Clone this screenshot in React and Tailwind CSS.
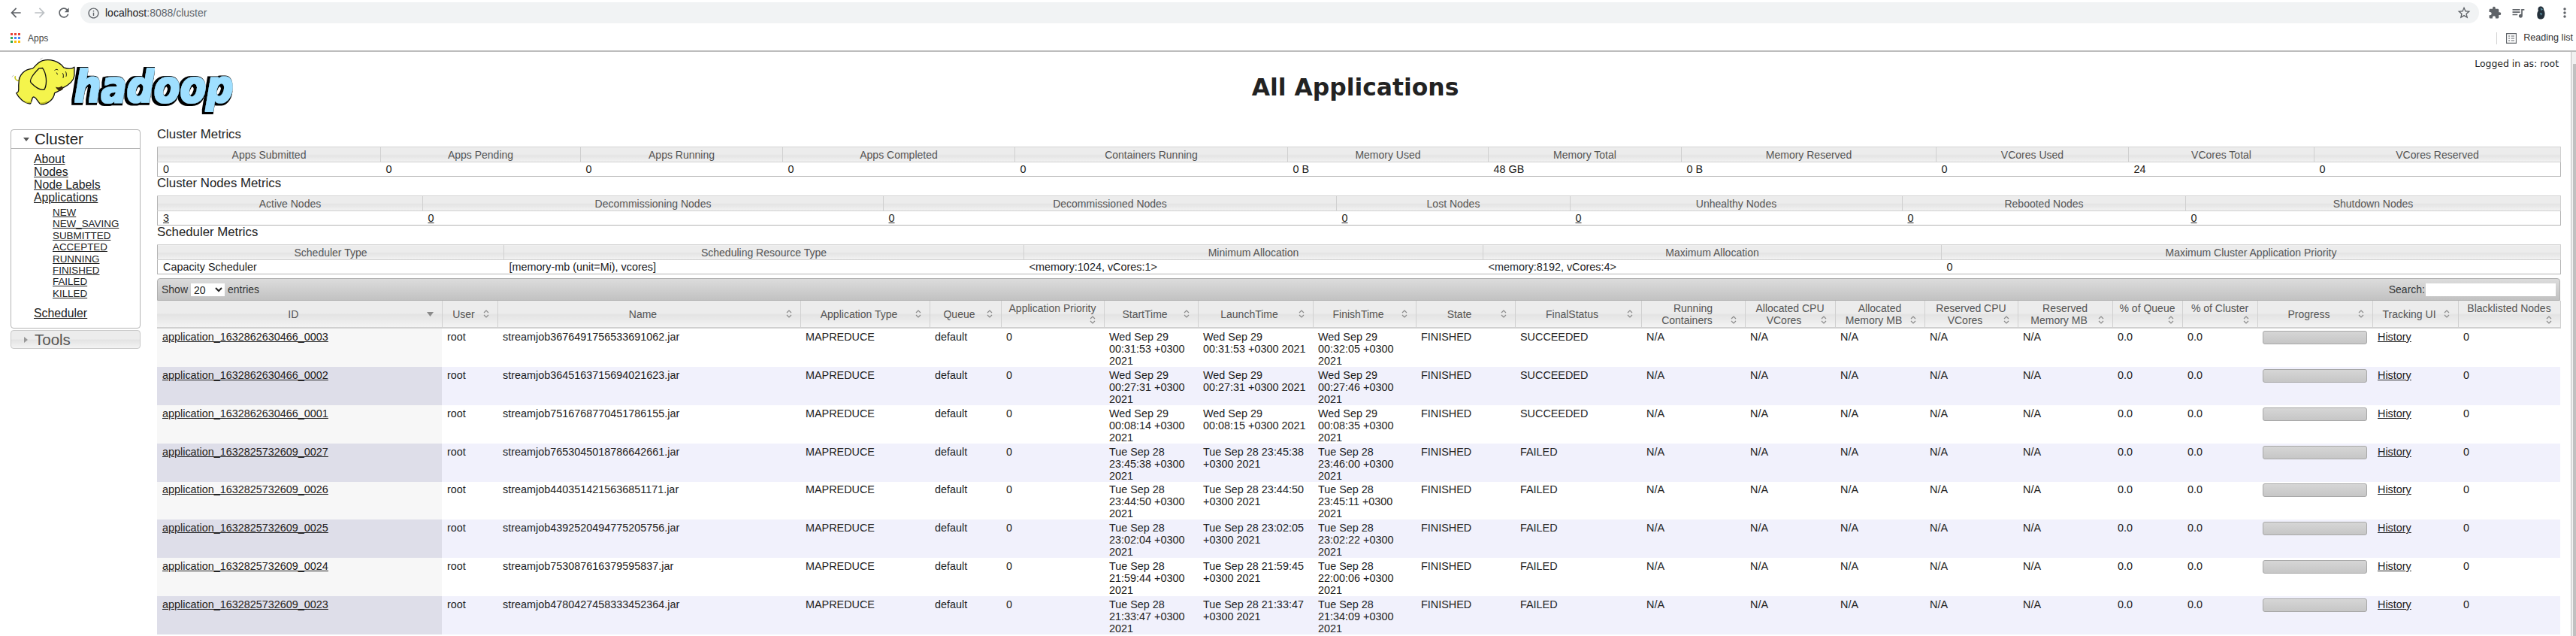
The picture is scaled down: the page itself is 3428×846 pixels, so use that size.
import React from 'react';
import {
  MdArrowBack,
  MdArrowForward,
  MdRefresh,
  MdInfoOutline,
  MdStarBorder,
  MdExtension,
  MdQueueMusic,
  MdMoreVert,
} from 'react-icons/md';

const headerBg = 'bg-[linear-gradient(180deg,#ececec_0%,#ececec_48%,#e3e3e3_52%,#f3f3f3_100%)]';

const clusterMetrics = [
  ['Apps Submitted', '0', 'w-[297px]'],
  ['Apps Pending', '0', 'w-[266px]'],
  ['Apps Running', '0', 'w-[269px]'],
  ['Apps Completed', '0', 'w-[309px]'],
  ['Containers Running', '0', 'w-[363px]'],
  ['Memory Used', '0 B', 'w-[267px]'],
  ['Memory Total', '48 GB', 'w-[257px]'],
  ['Memory Reserved', '0 B', 'w-[339px]'],
  ['VCores Used', '0', 'w-[256px]'],
  ['VCores Total', '24', 'w-[247px]'],
  ['VCores Reserved', '0', 'w-[328px]'],
];

const nodeMetrics = [
  ['Active Nodes', '3', 'w-[353px]'],
  ['Decommissioning Nodes', '0', 'w-[613px]'],
  ['Decommissioned Nodes', '0', 'w-[603px]'],
  ['Lost Nodes', '0', 'w-[311px]'],
  ['Unhealthy Nodes', '0', 'w-[442px]'],
  ['Rebooted Nodes', '0', 'w-[377px]'],
  ['Shutdown Nodes', '0', 'w-[499px]'],
];

const schedulerMetrics = [
  ['Scheduler Type', 'Capacity Scheduler', 'w-[461px]'],
  ['Scheduling Resource Type', '[memory-mb (unit=Mi), vcores]', 'w-[692px]'],
  ['Minimum Allocation', '<memory:1024, vCores:1>', 'w-[611px]'],
  ['Maximum Allocation', '<memory:8192, vCores:4>', 'w-[610px]'],
  ['Maximum Cluster Application Priority', '0', 'w-[824px]'],
];

// \n in a title is where the real page wraps it
const columns = [
  ['ID', 'w-[379px]'],
  ['User', 'w-[74px]'],
  ['Name', 'w-[403px]'],
  ['Application Type', 'w-[172px]'],
  ['Queue', 'w-[95px]'],
  ['Application Priority', 'w-[137px]'],
  ['StartTime', 'w-[125px]'],
  ['LaunchTime', 'w-[153px]'],
  ['FinishTime', 'w-[137px]'],
  ['State', 'w-[132px]'],
  ['FinalStatus', 'w-[168px]'],
  ['Running\nContainers', 'w-[138px]'],
  ['Allocated CPU\nVCores', 'w-[120px]'],
  ['Allocated\nMemory MB', 'w-[119px]'],
  ['Reserved CPU\nVCores', 'w-[124px]'],
  ['Reserved\nMemory MB', 'w-[126px]'],
  ['% of Queue', 'w-[93px]'],
  ['% of Cluster', 'w-[100px]'],
  ['Progress', 'w-[153px]'],
  ['Tracking UI', 'w-[114px]'],
  ['Blacklisted Nodes', 'w-[136px]'],
];

const apps = [
  ['application_1632862630466_0003', 'streamjob3676491756533691062.jar', 'Wed Sep 29 00:31:53 +0300 2021', 'Wed Sep 29\n00:31:53 +0300 2021', 'Wed Sep 29 00:32:05 +0300 2021', 'SUCCEEDED'],
  ['application_1632862630466_0002', 'streamjob3645163715694021623.jar', 'Wed Sep 29 00:27:31 +0300 2021', 'Wed Sep 29\n00:27:31 +0300 2021', 'Wed Sep 29 00:27:46 +0300 2021', 'SUCCEEDED'],
  ['application_1632862630466_0001', 'streamjob7516768770451786155.jar', 'Wed Sep 29 00:08:14 +0300 2021', 'Wed Sep 29\n00:08:15 +0300 2021', 'Wed Sep 29 00:08:35 +0300 2021', 'SUCCEEDED'],
  ['application_1632825732609_0027', 'streamjob7653045018786642661.jar', 'Tue Sep 28 23:45:38 +0300 2021', 'Tue Sep 28 23:45:38\n+0300 2021', 'Tue Sep 28 23:46:00 +0300 2021', 'FAILED'],
  ['application_1632825732609_0026', 'streamjob4403514215636851171.jar', 'Tue Sep 28 23:44:50 +0300 2021', 'Tue Sep 28 23:44:50\n+0300 2021', 'Tue Sep 28 23:45:11 +0300 2021', 'FAILED'],
  ['application_1632825732609_0025', 'streamjob4392520494775205756.jar', 'Tue Sep 28 23:02:04 +0300 2021', 'Tue Sep 28 23:02:05\n+0300 2021', 'Tue Sep 28 23:02:22 +0300 2021', 'FAILED'],
  ['application_1632825732609_0024', 'streamjob753087616379595837.jar', 'Tue Sep 28 21:59:44 +0300 2021', 'Tue Sep 28 21:59:45\n+0300 2021', 'Tue Sep 28 22:00:06 +0300 2021', 'FAILED'],
  ['application_1632825732609_0023', 'streamjob4780427458333452364.jar', 'Tue Sep 28 21:33:47 +0300 2021', 'Tue Sep 28 21:33:47\n+0300 2021', 'Tue Sep 28 21:34:09 +0300 2021', 'FAILED'],
];

const HadoopLogo = () => (
  <svg viewBox="45 50 895 215" className="w-[298px] h-[72px] overflow-visible shrink-0">
    <defs>
      {/* fattens the letters and throws the black shadow down-left */}
      <filter id="hadoop-type" x="-10%" y="-20%" width="120%" height="140%">
        <feMorphology in="SourceAlpha" operator="dilate" radius="3" result="fat" />
        <feFlood floodColor="#9fdfff" />
        <feComposite in2="fat" operator="in" result="face" />
        <feMorphology in="SourceAlpha" operator="dilate" radius="8" result="fatter" />
        <feOffset in="fatter" dx="-5" dy="3" result="moved" />
        <feFlood floodColor="#000" />
        <feComposite in2="moved" operator="in" result="shadow" />
        <feMerge>
          <feMergeNode in="shadow" />
          <feMergeNode in="face" />
        </feMerge>
      </filter>
    </defs>
    <text
      x="296"
      y="226"
      textLength="636"
      lengthAdjust="spacingAndGlyphs"
      fontFamily="DejaVu Sans"
      fontWeight="bold"
      fontStyle="italic"
      fontSize="176"
      fill="#9fdfff"
      filter="url(#hadoop-type)"
    >
      hadoop
    </text>
    {/* elephant */}
    <path d="M62 122c-6 8 2 16 8 18 8 2 10-6 6-12" fill="none" stroke="#c8c820" strokeWidth="5" />
    <path
      d="M297 86c-10 8-26 8-42 2-20-26-55-36-85-28-20 6-30 25-40 32-30 3-55 23-55 58-3 20 5 35-10 40 10 20 30 40 55 43 10-8 5-28 15-28 15 5 15 25 30 30 25 0 50-20 53-45 7-5 27-10 32-20 20-10 45-25 47-50z"
      fill="#f4f44c"
      stroke="#111"
      strokeWidth="4"
      strokeLinejoin="round"
    />
    <path d="M155 92c-25 25-40 48-30 58 20 20 40 30 53 25 12-25 7-65-8-85z" fill="#f7f75a" stroke="#111" strokeWidth="4" />
    <path d="M222 165c8 16 20 20 30 8l-4-12c-8 6-18 8-26 4z" fill="#3a2a10" />
    <path d="M218 100c4-6 10-6 14-2M226 108l4 8M250 110c4 6 4 12 2 20M262 104c4 6 4 14 2 20" fill="none" stroke="#111" strokeWidth="3" />
    <path d="M160 56l10-6M54 118l-6 8" fill="none" stroke="#999" strokeWidth="2" />
    <path d="M100 225c10 3 18 4 26 1M160 230c10 2 20 0 28-6" fill="none" stroke="#b8b820" strokeWidth="5" />
  </svg>
);

const SortIcon = ({ sorted }) => (
  <span className="float-right w-4 h-4 flex items-center justify-center text-[#8a8a8a]">
    {sorted ? (
      <svg viewBox="0 0 9 6" className="w-[9px] h-[6px]">
        <path d="M0 0h9L4.5 6z" fill="currentColor" />
      </svg>
    ) : (
      <svg viewBox="0 0 8 13" className="w-2 h-[13px]">
        <path d="M1 5l3-3 3 3M1 8l3 3 3-3" fill="none" stroke="currentColor" strokeWidth="1.2" />
      </svg>
    )}
  </span>
);

const MetricsTable = ({ title, cells, link }) => (
  <div>
    <h3 className="h-[25px] text-[16.8px] leading-[18px] font-normal text-[#222]">{title}</h3>
    <table className="table-fixed border-collapse w-[3198px] border border-[#b4b4b4] border-t-[#d0d0d0]">
      <colgroup>
        {cells.map(c => (
          <col key={c[0]} className={c[2]} />
        ))}
      </colgroup>
      <thead>
        <tr>
          {cells.map(c => (
            <th key={c[0]} className={`h-[20px] p-0 text-center text-[14px] leading-[16px] font-normal text-[#555] border-r border-b border-[#d0d0d0] ${headerBg}`}>
              {c[0]}
            </th>
          ))}
        </tr>
      </thead>
      <tbody>
        <tr>
          {cells.map(c => (
            <td key={c[0]} className="h-[19px] p-0 pl-[7px] text-[14.4px] leading-[16px] text-[#222]">
              {link ? <a className="underline">{c[1]}</a> : c[1]}
            </td>
          ))}
        </tr>
      </tbody>
    </table>
  </div>
);

const Sidebar = () => (
  <aside className="w-[173px] mt-[2px] shrink-0">
    <div className="border border-[#b4b4b4] rounded-[4px] h-[265px]">
      <div className="h-[25px] flex items-center pl-[16px] border-b border-[#b4b4b4]">
        <svg viewBox="0 0 8 5" className="w-2 h-[5px] mr-[7px] text-[#555]"><path d="M0 0h8L4 5z" fill="currentColor" /></svg>
        <span className="text-[20.5px] leading-[24px] text-[#222]">Cluster</span>
      </div>
      <div className="pt-[5px] pl-[30px] text-[15.8px] leading-[17px] text-[#222] underline">
        <a className="block">About</a>
        <a className="block">Nodes</a>
        <a className="block">Node Labels</a>
        <a className="block">Applications</a>
        <div className="mt-[4px] ml-[25px] text-[13.4px] leading-[15.4px]">
          {['NEW', 'NEW_SAVING', 'SUBMITTED', 'ACCEPTED', 'RUNNING', 'FINISHED', 'FAILED', 'KILLED'].map(s => (
            <a key={s} className="block">{s}</a>
          ))}
        </div>
        <a className="block mt-[10px]">Scheduler</a>
      </div>
    </div>
    <div className={`mt-[2px] h-[25px] flex items-center pl-[17px] border border-[#c8c8c8] rounded-[4px] ${headerBg}`}>
      <svg viewBox="0 0 5 8" className="w-[5px] h-2 mr-[9px] text-[#999]"><path d="M0 0l5 4-5 4z" fill="currentColor" /></svg>
      <span className="text-[20.5px] leading-[24px] text-[#555]">Tools</span>
    </div>
  </aside>
);

const AppsTable = () => (
  <table className="table-fixed border-collapse w-[3198px]">
    <colgroup>
      {columns.map(c => (
        <col key={c[0]} className={c[1]} />
      ))}
    </colgroup>
    <thead>
      <tr>
        {columns.map((c, i) => (
          <th key={c[0]} className={`h-[36px] px-[7px] py-0 align-middle text-center whitespace-pre-line text-[14px] leading-[16px] font-normal text-[#555] border-r border-b-2 border-[#d0d0d0] ${headerBg}`}>
            {c[0]}
            <SortIcon sorted={i === 0} />
          </th>
        ))}
      </tr>
    </thead>
    <tbody className="text-[14.4px] leading-[16px] text-[#222]">
      {apps.map((a, r) => {
        const even = r % 2 === 1;
        const bg = even ? 'bg-[#f1f1fc]' : 'bg-white';
        const td = `p-0 pl-[7px] pr-[7px] pt-[2.875px] align-top ${bg}`;
        return (
          <tr key={a[0]} className="h-[50.875px]">
            <td className={`p-0 pl-[7px] pt-[2.875px] align-top ${even ? 'bg-[#dedee9]' : 'bg-[#f7f7f7]'}`}>
              <a className="underline">{a[0]}</a>
            </td>
            <td className={td}>root</td>
            <td className={td}>{a[1]}</td>
            <td className={td}>MAPREDUCE</td>
            <td className={td}>default</td>
            <td className={td}>0</td>
            <td className={td}>{a[2]}</td>
            <td className={`${td} whitespace-pre-line`}>{a[3]}</td>
            <td className={td}>{a[4]}</td>
            <td className={td}>FINISHED</td>
            <td className={td}>{a[5]}</td>
            <td className={td}>N/A</td>
            <td className={td}>N/A</td>
            <td className={td}>N/A</td>
            <td className={td}>N/A</td>
            <td className={td}>N/A</td>
            <td className={td}>0.0</td>
            <td className={td}>0.0</td>
            <td className={td}>
              <div className="h-[18px] w-[139px] rounded-[3px] border border-[#a8a8a8] bg-[linear-gradient(180deg,#d6d6d6,#c6c6c6)]" />
            </td>
            <td className={td}><a className="underline">History</a></td>
            <td className={td}>0</td>
          </tr>
        );
      })}
    </tbody>
  </table>
);

const BrowserBar = () => (
  <div className="h-[69px] border-b-2 border-[#bdbdbd] bg-white font-['Liberation_Sans',sans-serif]">
    <div className="h-[34px] flex items-center pl-[11px] text-[#5f6368]">
      <MdArrowBack className="w-5 h-5" />
      <MdArrowForward className="w-5 h-5 ml-[12px] text-[#bcc0c4]" />
      <MdRefresh className="w-5 h-5 ml-[12px]" />
      <div className="ml-[12px] h-[28px] flex-1 rounded-full bg-[#f1f3f4] flex items-center pl-[9px] pr-[10px]">
        <MdInfoOutline className="w-[17px] h-[17px]" />
        <span className="ml-[7px] text-[14px] text-[#5f6368]"><span className="text-[#202124]">localhost</span>:8088/cluster</span>
        <MdStarBorder className="w-5 h-5 ml-auto" />
      </div>
      <div className="w-[129px] flex items-center pl-[6px] shrink-0">
        <span className="w-[31px] flex justify-center"><MdExtension className="w-[18px] h-[18px]" /></span>
        <span className="w-[31px] flex justify-center"><MdQueueMusic className="w-5 h-5" /></span>
        <span className="w-[31px] flex justify-center">
          <svg viewBox="0 0 14 20" className="w-[13px] h-5">
            <path d="M5 1c4-1 6 2 6 5 2 3 2 8 0 11-2 3-7 3-9 0-1-4-1-7 1-10C2 4 3 2 5 1z" fill="#24303a" />
            <path d="M6 3l4 2-3 2zM5 10l4 1-2 3z" fill="#5a8ea0" />
          </svg>
        </span>
        <span className="w-[31px] flex justify-center"><MdMoreVert className="w-5 h-5" /></span>
      </div>
    </div>
    <div className="h-[33px] flex items-center pl-[14px] pr-[4px] text-[12px] text-[#444]">
      <div className="grid grid-cols-3 gap-[2px] w-[13px]">
        {['bg-[#ea4335]', 'bg-[#ea4335]', 'bg-[#ea4335]', 'bg-[#34a853]', 'bg-[#4285f4]', 'bg-[#4285f4]', 'bg-[#34a853]', 'bg-[#fbbc05]', 'bg-[#fbbc05]'].map((c, i) => (
          <span key={i} className={`w-[3px] h-[3px] ${c}`} />
        ))}
      </div>
      <span className="ml-[10px]">Apps</span>
      <span className="ml-auto w-px h-[16px] bg-[#d0d0d0]" />
      <svg viewBox="0 0 14 14" className="ml-[12px] w-[14px] h-[14px] text-[#5f6368]">
        <path d="M.6.6h12.8v12.8H.6zM3 4h2M6.5 4H11M3 7h2M6.5 7H11M3 10h2M6.5 10H11" fill="none" stroke="currentColor" strokeWidth="1.1" />
      </svg>
      <span className="ml-[9px] text-[12.6px] text-[#333]">Reading list</span>
    </div>
  </div>
);

const App = () => {
  return (
    <div className="w-full h-[846px] overflow-hidden bg-white flex flex-col font-['Liberation_Sans',sans-serif]">
      <BrowserBar />
      <div className="flex flex-1 min-h-0">
        <div className="relative flex-1 min-w-0 overflow-hidden">
          <div className="absolute top-[8px] right-[16px] text-[12.4px] leading-[16px] text-[#222] font-['DejaVu_Sans',sans-serif]">
            Logged in as: root
          </div>
          <header className="h-[101px] flex items-start">
            <div className="w-[186px] pl-[15px] pt-[8px] shrink-0">
              <HadoopLogo />
            </div>
            <h1 className="flex-1 text-center pt-[27px] text-[31.4px] leading-[40px] font-bold text-[#222] font-['DejaVu_Sans',sans-serif]">
              All Applications
            </h1>
          </header>
          <div className="flex pl-[14px] gap-[22px]">
            <Sidebar />
            <main className="w-[3198px] shrink-0">
              <MetricsTable title="Cluster Metrics" cells={clusterMetrics} />
              <MetricsTable title="Cluster Nodes Metrics" cells={nodeMetrics} link />
              <MetricsTable title="Scheduler Metrics" cells={schedulerMetrics} />
              <div className="mt-[5px] h-[30px] flex items-center justify-between pl-[5px] pr-[5px] rounded-t-[4px] border border-[#b0b0b0] bg-[linear-gradient(180deg,#dcdcdc,#c2c2c2)] text-[14px] text-[#333]">
                <div className="flex items-center">
                  Show
                  <select defaultValue="20" className="mx-[4px] w-[45px] h-[17px] bg-white text-[14px] leading-[16px] text-[#222]">
                    <option value="20">20</option>
                  </select>
                  entries
                </div>
                <label className="flex items-center">
                  Search:
                  <input className="ml-[1px] w-[173px] h-[17px] bg-white" />
                </label>
              </div>
              <AppsTable />
            </main>
          </div>
        </div>
        <div className="w-[7px] border-l border-[#bdbdbd] bg-[#f1f1f1] pt-[16px] pl-[2px]">
          <div className="h-full bg-[#c1c1c1]" />
        </div>
      </div>
    </div>
  );
};

export default App;
